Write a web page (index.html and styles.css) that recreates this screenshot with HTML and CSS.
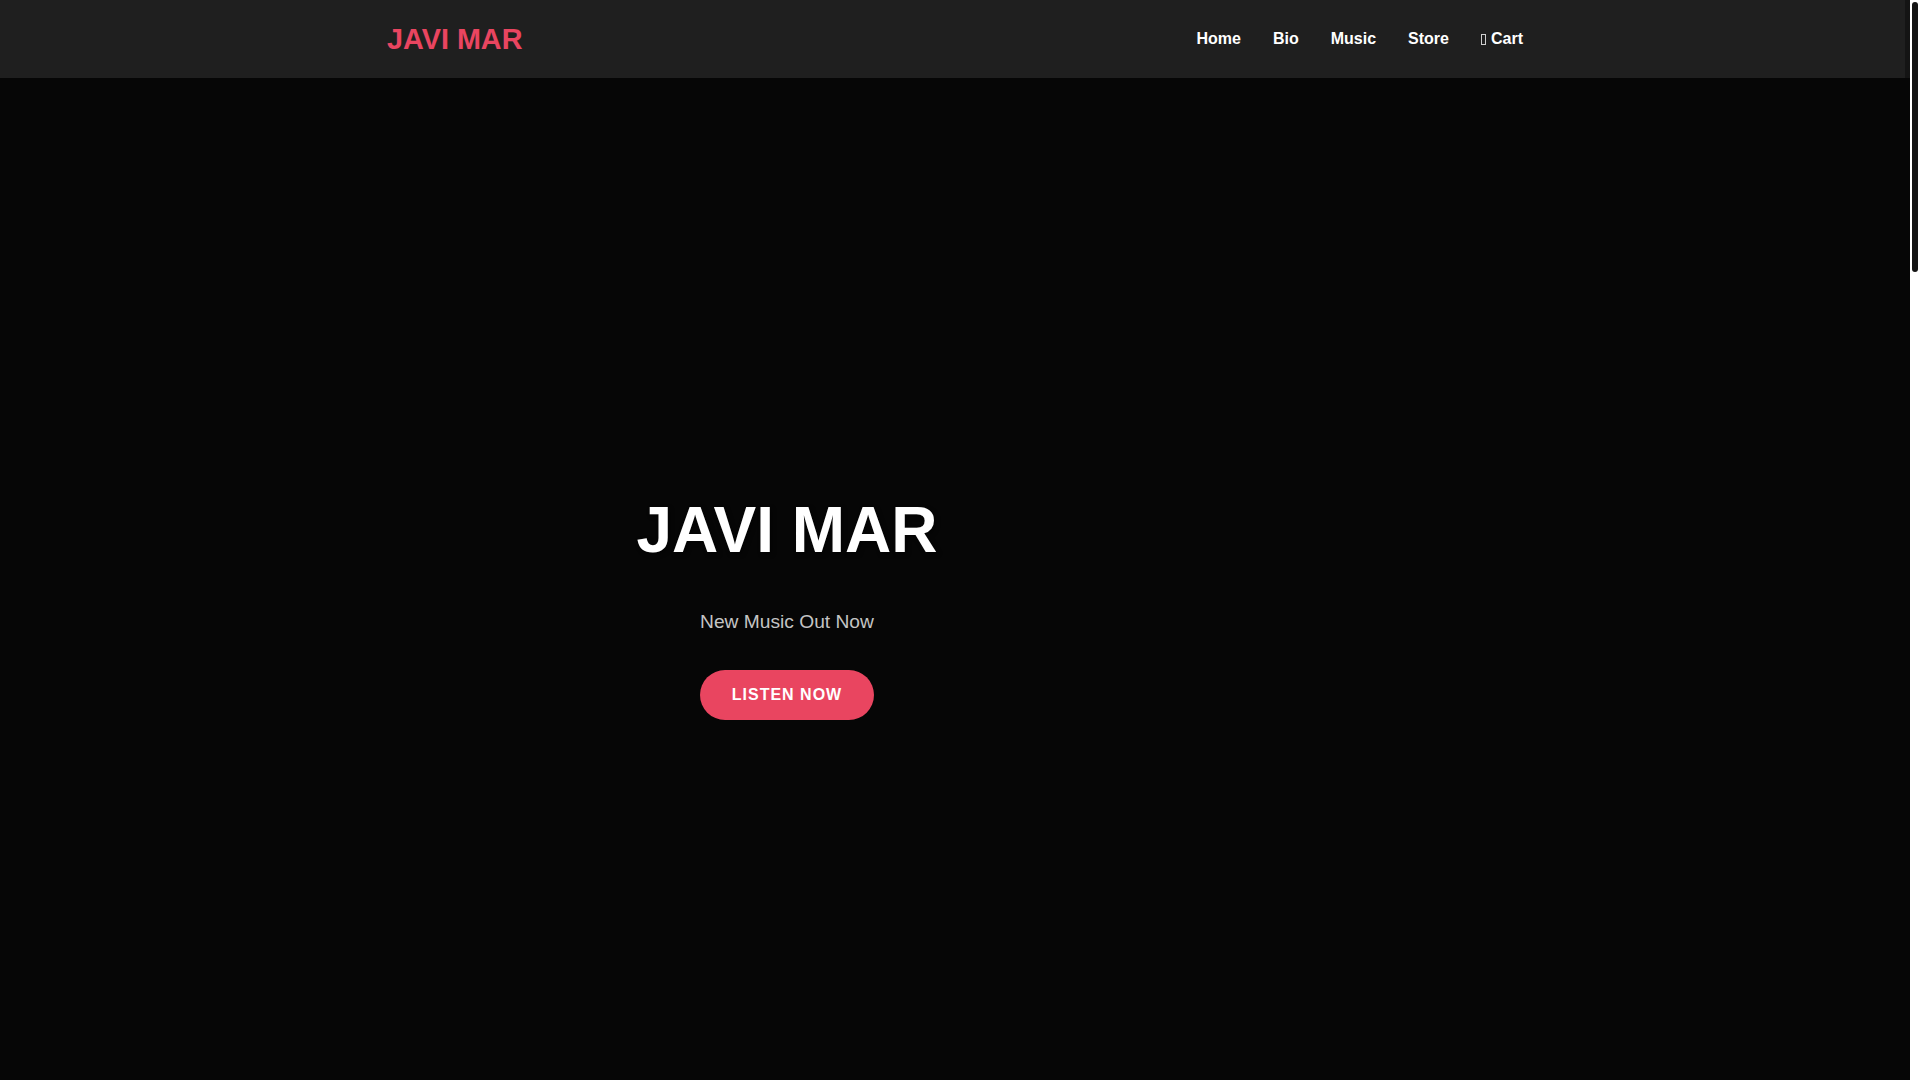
FILE: index.html
```html
<!DOCTYPE html>
<html lang="en">
<head>
<meta charset="utf-8">
<title>Javi Mar</title>
<link rel="stylesheet" href="styles.css">
</head>
<body>
<div class="page">
<header class="navbar">
  <div class="container nav-inner">
    <a class="logo" href="#">JAVI MAR</a>
    <nav class="nav-links">
      <a href="#">Home</a>
      <a href="#">Bio</a>
      <a href="#">Music</a>
      <a href="#">Store</a>
      <a href="#"><span class="icon" aria-hidden="true"></span>Cart</a>
    </nav>
  </div>
</header>
<main>
  <section class="hero">
    <div class="container">
      <div class="hero-content">
        <h1 class="hero-title">JAVI MAR</h1>
        <p class="hero-sub">New Music Out Now</p>
        <a class="btn" href="#">LISTEN NOW</a>
      </div>
    </div>
  </section>
</main>
</div>
<div class="scrollbar" aria-hidden="true"><div class="scroll-thumb"></div></div>
</body>
</html>
```

FILE: styles.css
```css
* { box-sizing: border-box; }
html, body { height: 100%; }
body {
  margin: 0;
  overflow: hidden;
  display: flex;
  font-family: "Liberation Sans", Arial, sans-serif;
  color: #fff;
  background: #fff;
  line-height: 1.6;
}
.page {
  flex: 1;
  min-width: 0;
  height: 100vh;
  overflow: hidden;
  background: #060606;
}
.scrollbar {
  width: 10px;
  flex: none;
  background: #fff;
  padding: 2px;
}
.scroll-thumb {
  height: 270px;
  background: #141414;
  border-radius: 3px;
}
a { text-decoration: none; color: inherit; }
.container {
  max-width: 1200px;
  margin: 0 auto;
  padding: 0 32px;
}
.navbar {
  background: #1f1f1f;
  height: 78px;
  border-right: 5px solid #141414;
}
.nav-inner {
  height: 100%;
  display: flex;
  align-items: center;
  justify-content: space-between;
  position: relative;
  left: 2.5px;
}
.logo {
  color: #e94560;
  font-weight: 700;
  font-size: 28.8px;
  line-height: 1;
  padding-top: 1px;
}
.nav-links {
  display: flex;
  align-items: center;
  gap: 32px;
  font-weight: 700;
  font-size: 16px;
}
.nav-links a {
  color: #fff;
  display: flex;
  align-items: center;
}
.icon {
  display: inline-block;
  width: 5px;
  height: 11px;
  border: 1px solid #cfcfcf;
  margin: 1px 5px 0 0;
}
.hero {
  padding-top: 414px;
  height: 1002px;
}
.hero-content {
  max-width: 800px;
  text-align: center;
}
.hero-title {
  margin: 0 0 38px;
  font-size: 64px;
  line-height: 1.2;
  font-weight: 700;
  text-shadow: 2px 2px 4px rgba(0,0,0,0.5);
}
.hero-sub {
  margin: 0 0 32px;
  font-size: 19.2px;
  color: #c4c4c4;
}
.btn {
  display: inline-block;
  background: #e94560;
  color: #fff;
  font-weight: 700;
  font-size: 16px;
  line-height: 18px;
  letter-spacing: 1px;
  padding: 16px 32px;
  border-radius: 50px;
}
```
